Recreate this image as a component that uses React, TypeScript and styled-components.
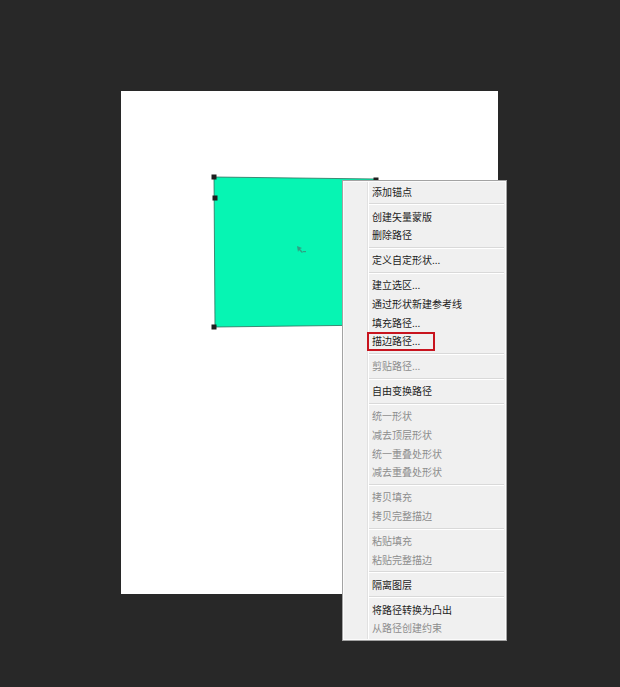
import React from 'react'
import styled, { createGlobalStyle } from 'styled-components'

const GlobalStyle = createGlobalStyle`
  html, body {
    margin: 0;
    padding: 0;
    background: #282828;
  }
  body {
    font-family: "Noto Sans CJK SC", "Noto Sans", sans-serif;
  }
`

type MenuEntry = { label: string; disabled?: boolean; marked?: boolean } | 'sep'

const entries: MenuEntry[] = [
  { label: '添加锚点' },
  'sep',
  { label: '创建矢量蒙版' },
  { label: '删除路径' },
  'sep',
  { label: '定义自定形状...' },
  'sep',
  { label: '建立选区...' },
  { label: '通过形状新建参考线' },
  { label: '填充路径...' },
  { label: '描边路径...', marked: true },
  'sep',
  { label: '剪贴路径...', disabled: true },
  'sep',
  { label: '自由变换路径' },
  'sep',
  { label: '统一形状', disabled: true },
  { label: '减去顶层形状', disabled: true },
  { label: '统一重叠处形状', disabled: true },
  { label: '减去重叠处形状', disabled: true },
  'sep',
  { label: '拷贝填充', disabled: true },
  { label: '拷贝完整描边', disabled: true },
  'sep',
  { label: '粘贴填充', disabled: true },
  { label: '粘贴完整描边', disabled: true },
  'sep',
  { label: '隔离图层' },
  'sep',
  { label: '将路径转换为凸出' },
  { label: '从路径创建约束', disabled: true },
]

export default function App() {
  return (
    <>
      <GlobalStyle />
      <Workspace>
        <Canvas>
          <ShapeLayer viewBox="0 0 377 503">
            <polygon points="93,86 255,88 257,234 94,236" fill="#06f5b3" />
            <polyline
              points="255,88 93,86 94,236 257,234"
              fill="none"
              stroke="#2a6f5a"
              strokeWidth="0.8"
            />
            {[
              [93, 86],
              [255, 89],
              [94, 107],
              [93, 236],
            ].map(([x, y]) => (
              <rect key={`${x}-${y}`} x={x - 2.5} y={y - 2.5} width="5" height="5" fill="#1e1e1e" />
            ))}
            <g transform="translate(176,155)" fill="#3a8c78" opacity="0.8">
              <path d="M0 0 L5 2 L3 3 L6 6 L5 7 L2 4 L1 6 Z" />
              <rect x="6" y="5" width="3" height="1.2" />
            </g>
          </ShapeLayer>
        </Canvas>

        <ContextMenu>
          {entries.map((entry, i) =>
            entry === 'sep' ? (
              <Separator key={i} />
            ) : (
              <Item key={i} $disabled={entry.disabled}>
                {entry.marked ? <Mark>{entry.label}</Mark> : entry.label}
              </Item>
            ),
          )}
        </ContextMenu>
      </Workspace>
    </>
  )
}

const Workspace = styled.div`
  position: relative;
  min-height: 687px;
  padding: 91px 0 0 121px;
  box-sizing: border-box;
  background: #282828;
`

const Canvas = styled.div`
  position: relative;
  width: 377px;
  height: 503px;
  background: #ffffff;
`

const ShapeLayer = styled.svg`
  display: block;
  width: 100%;
  height: 100%;
`

const ContextMenu = styled.div`
  position: absolute;
  left: 342px;
  top: 180px;
  width: 165px;
  box-sizing: border-box;
  padding: 1.6px 0 1.6px;
  border: 1px solid #a3a3a3;
  box-shadow: inset 0 0 0 1px #fbfbfb;
  background: linear-gradient(
      to right,
      transparent 24px,
      #e1e1e1 24px,
      #e1e1e1 25px,
      #ffffff 25px,
      #ffffff 26px,
      transparent 26px
    ),
    #f0f0f0;
`

const Item = styled.div<{ $disabled?: boolean }>`
  height: 18.7px;
  line-height: 18.7px;
  padding-left: 29px;
  font-size: 10px;
  white-space: nowrap;
  color: ${(p) => (p.$disabled ? '#8d8d8d' : '#1c1c1c')};
`

const Mark = styled.span`
  display: inline-block;
  box-sizing: border-box;
  width: 68px;
  height: 18.7px;
  line-height: 14.7px;
  margin-left: -5px;
  padding-left: 3px;
  border: 2px solid #c8141e;
  vertical-align: top;
`

const Separator = styled.div`
  height: 6.3px;
  margin-left: 26px;
  margin-right: 2px;
  display: flex;
  flex-direction: column;
  justify-content: center;

  &::before {
    content: '';
    display: block;
    height: 1px;
    background: #d9d9d9;
  }
  &::after {
    content: '';
    display: block;
    height: 1px;
    background: #ffffff;
  }
`
